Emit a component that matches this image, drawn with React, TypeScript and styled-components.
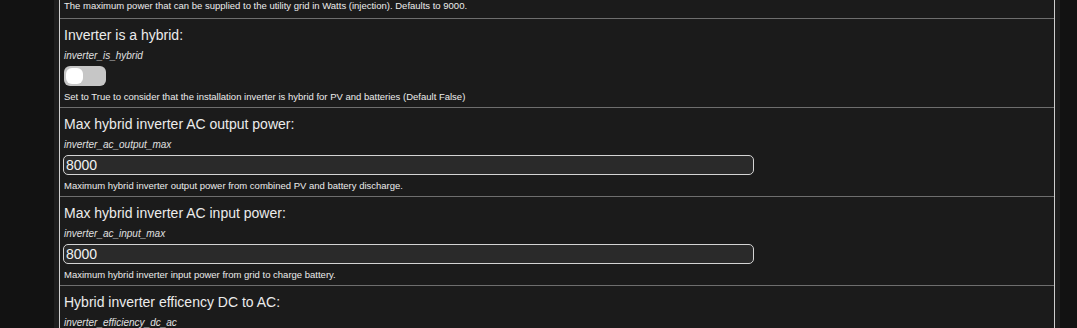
import styled, { createGlobalStyle } from "styled-components";

const GlobalStyle = createGlobalStyle`
  html, body {
    margin: 0;
    padding: 0;
    background: #121212;
    font-family: "Liberation Sans", Arial, sans-serif;
  }
`;

const Page = styled.div`
  display: flex;
  height: 328px;
  overflow: hidden;
  padding-left: 54px;
`;

const Panel = styled.div`
  width: 996px;
  box-sizing: border-box;
  margin-left: 5px;
  background: #1b1b1b;
  border-left: 1px solid #cfcfcf;
  border-right: 1px solid #cfcfcf;
  box-shadow: 0 0 0 5px #1e1e1e;
`;

const Section = styled.div<{ $first?: boolean }>`
  display: flex;
  flex-direction: column;
  align-items: flex-start;
  padding: ${(p) => (p.$first ? "0 4px 6px" : "6px 4px 4px")};
  margin-top: ${(p) => (p.$first ? "-1px" : "0")};
  border-bottom: 1px solid #6e6e6e;
`;

const Title = styled.h3`
  margin: 0;
  font-size: 14px;
  line-height: 20px;
  font-weight: 400;
  color: #ececec;
`;

const Key = styled.i`
  margin-top: 4px;
  font-size: 10px;
  line-height: 14px;
  color: #e0e0e0;
`;

const Help = styled.p<{ $flush?: boolean }>`
  margin: ${(p) => (p.$flush ? "0" : "4px 0 0")};
  font-size: 9.5px;
  line-height: 13px;
  color: #ececec;
`;

const NumberInput = styled.input`
  margin: 3px 0 0 -1px;
  width: 691px;
  height: 20px;
  box-sizing: border-box;
  padding: 0 2px;
  background: #2a2a2a;
  border: 1px solid #d4d4d4;
  border-radius: 5px;
  color: #f2f2f2;
  font-family: "Liberation Sans", Arial, sans-serif;
  font-size: 14px;
  outline: none;
`;

const Switch = styled.span<{ $on?: boolean }>`
  margin-top: 3px;
  width: 42px;
  height: 20px;
  box-sizing: border-box;
  padding: 2px;
  border-radius: 6px;
  background: ${(p) => (p.$on ? "#4a90d9" : "#c6c6c6")};
  display: flex;
  justify-content: ${(p) => (p.$on ? "flex-end" : "flex-start")};
`;

const Knob = styled.span`
  width: 17px;
  height: 16px;
  border-radius: 6px;
  background: #ffffff;
`;

const fields = [
  {
    title: "Max hybrid inverter AC output power:",
    key: "inverter_ac_output_max",
    value: "8000",
    help: "Maximum hybrid inverter output power from combined PV and battery discharge.",
  },
  {
    title: "Max hybrid inverter AC input power:",
    key: "inverter_ac_input_max",
    value: "8000",
    help: "Maximum hybrid inverter input power from grid to charge battery.",
  },
];

export default function App() {
  return (
    <>
      <GlobalStyle />
      <Page>
        <Panel>
          <Section $first>
            <Help $flush>
              The maximum power that can be supplied to the utility grid in Watts
              (injection). Defaults to 9000.
            </Help>
          </Section>
          <Section>
            <Title>Inverter is a hybrid:</Title>
            <Key>inverter_is_hybrid</Key>
            <Switch>
              <Knob />
            </Switch>
            <Help>
              Set to True to consider that the installation inverter is hybrid for
              PV and batteries (Default False)
            </Help>
          </Section>
          {fields.map((f) => (
            <Section key={f.key}>
              <Title>{f.title}</Title>
              <Key>{f.key}</Key>
              <NumberInput type="text" defaultValue={f.value} />
              <Help>{f.help}</Help>
            </Section>
          ))}
          <Section>
            <Title>Hybrid inverter efficency DC to AC:</Title>
            <Key>inverter_efficiency_dc_ac</Key>
          </Section>
        </Panel>
      </Page>
    </>
  );
}
